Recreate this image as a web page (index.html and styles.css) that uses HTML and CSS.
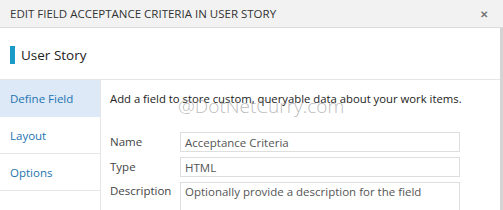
FILE: index.html
```html
<!DOCTYPE html>
<html>
<head>
<meta charset="utf-8">
<link rel="stylesheet" href="styles.css">
</head>
<body>
<div class="dialog">
  <div class="titlebar">
    <span class="title">EDIT FIELD ACCEPTANCE CRITERIA IN USER STORY</span>
    <span class="close">&#x2715;</span>
  </div>
  <div class="main">
    <div class="wit">
      <span class="wit-bar"></span>
      <span class="wit-name">User Story</span>
    </div>
    <div class="body">
      <nav class="nav">
        <div class="nav-item active">Define Field</div>
        <div class="nav-item">Layout</div>
        <div class="nav-item">Options</div>
      </nav>
      <div class="content">
        <p class="intro">Add a field to store custom, queryable data about your work items.</p>
        <div class="form">
          <label class="lbl">Name</label>
          <div class="input">Acceptance Criteria</div>
          <label class="lbl">Type</label>
          <div class="input">HTML</div>
          <label class="lbl top">Description</label>
          <div class="input area">Optionally provide a description for the field</div>
        </div>
        <span class="watermark">@DotNetCurry.com</span>
      </div>
    </div>
  </div>
  <div class="edge"></div>
</div>
</body>
</html>
```
FILE: styles.css
```css
* { box-sizing: border-box; }
html, body { margin: 0; padding: 0; }
body {
  width: 503px;
  height: 210px;
  overflow: hidden;
  background: #fff;
  font-family: "Open Sans", "Noto Sans", sans-serif;
  color: #222;
}
.dialog {
  position: relative;
  width: 503px;
  height: 210px;
  overflow: hidden;
}
.titlebar {
  height: 28px;
  background: #f2f2f2;
  border-bottom: 1px solid #dcdcdc;
  display: flex;
  align-items: center;
  justify-content: space-between;
  padding: 0 15px 0 10px;
}
.title {
  font-size: 11.5px;
  color: #333;
}
.close {
  font-size: 10px;
  font-weight: bold;
  color: #777;
}
.wit {
  height: 52px;
  display: flex;
  align-items: center;
  padding: 3px 0 0 10px;
  border-bottom: 1px solid #e6e6e6;
}
.wit-bar {
  width: 5px;
  height: 18px;
  background: #1a9ac7;
  margin-right: 6px;
}
.wit-name {
  font-size: 13.5px;
  color: #222;
}
.body {
  display: flex;
  height: 130px;
}
.nav {
  width: 101px;
  border-right: 1px solid #e6e6e6;
  flex: none;
}
.nav-item {
  height: 37px;
  display: flex;
  align-items: center;
  padding-left: 10px;
  font-size: 11.5px;
  color: #1e74b0;
  border-bottom: 1px solid #e6e6e6;
}
.nav-item.active {
  background: #dde9f7;
  border-bottom-color: #dde9f7;
}
.content {
  position: relative;
  flex: 1;
  padding: 11px 0 0 9px;
}
.intro {
  margin: 0;
  font-size: 11.3px;
  color: #222;
}
.form {
  display: grid;
  grid-template-columns: 70px 280px;
  row-gap: 5px;
  margin-top: 26px;
  align-items: center;
}
.lbl {
  font-size: 11.5px;
  color: #444;
  padding-bottom: 2px;
}
.lbl.top {
  align-self: start;
  padding-top: 1px;
}
.input {
  height: 20px;
  border: 1px solid #dedede;
  padding: 0 4px;
  font-size: 11.5px;
  color: #555;
  display: flex;
  align-items: center;
}
.input.area {
  height: 40px;
  align-items: flex-start;
  padding-top: 1px;
}
.watermark {
  position: absolute;
  left: 77px;
  top: 13px;
  font-size: 19px;
  font-weight: 300;
  color: rgba(150, 150, 150, 0.65);
}
.edge {
  position: absolute;
  right: 0;
  top: 28px;
  width: 3px;
  height: 182px;
  background: #d4d4d4;
}
```
